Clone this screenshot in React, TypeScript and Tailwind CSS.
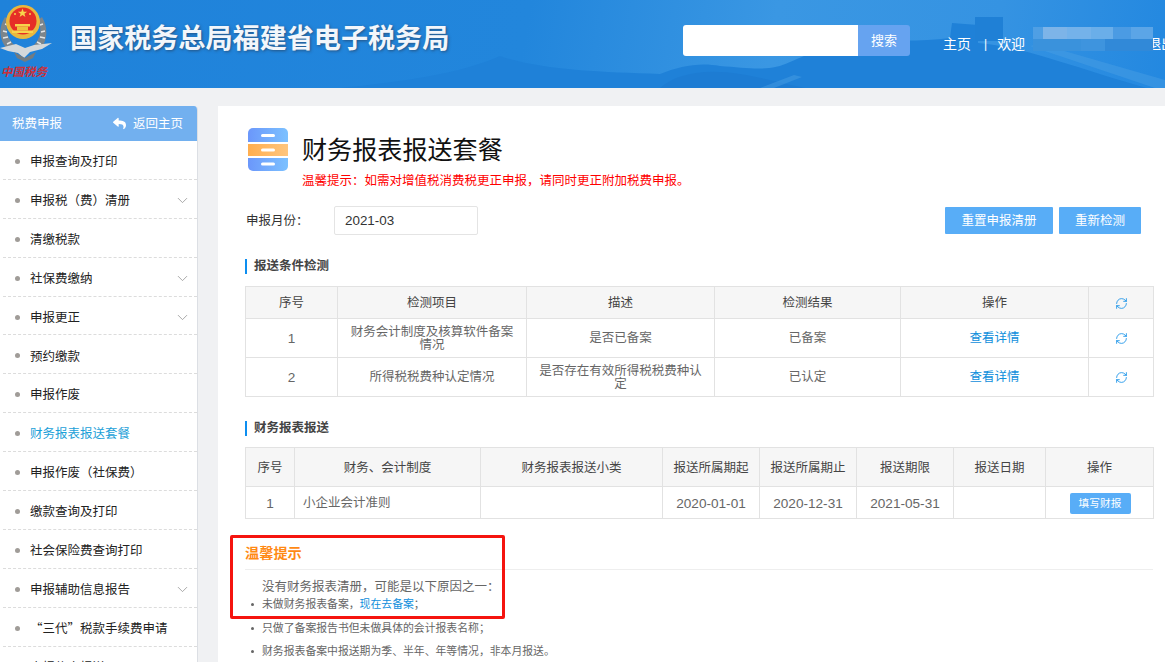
import { ChevronDown, RefreshCw } from "lucide-react";
import { FaReply } from "react-icons/fa";

const menu: [string, boolean][] = [
  ["申报查询及打印", false],
  ["申报税（费）清册", true],
  ["清缴税款", false],
  ["社保费缴纳", true],
  ["申报更正", true],
  ["预约缴款", false],
  ["申报作废", false],
  ["财务报表报送套餐", false],
  ["申报作废（社保费）", false],
  ["缴款查询及打印", false],
  ["社会保险费查询打印", false],
  ["申报辅助信息报告", true],
  ["“三代”税款手续费申请", false],
  ["申报信息报送", false],
];

/** Tax bureau emblem, drawn small. */
function Emblem() {
  return (
    <svg width="54" height="80" viewBox="0 0 54 80" className="shrink-0">
      <path d="M5 17C-2 28-1 40 8 50l7-4C7 38 4 28 9 20z" fill="#7c858b" />
      <path d="M42 17c6 10 6 22-1 32l-7-4c7-7 8-17 4-25z" fill="#7c858b" />
      <path d="M5 24l3 1M3 31l4 1M3 38l5-1M7 44l4-2M43 24l-3 1M45 31l-4 1M45 38l-5-1M41 44l-4-2" stroke="#e4e7e8" strokeWidth="1.4" />
      <path d="M0 48l16-4 9 4 9-3 18-2-10 6-12 3-6 6-6-5-10-2z" fill="#d4d8da" />
      <path d="M14 52l11 6 11-6-3 6-8 4-8-4z" fill="#737b80" />
      <circle cx="23" cy="22" r="17" fill="#e9b83e" />
      <circle cx="23" cy="21" r="13.5" fill="#e62e27" />
      <path d="M22.5 8.5l1.2 3.2h3.4l-2.7 2 1 3.3-2.9-2-2.9 2 1-3.3-2.7-2h3.4z" fill="#f7d44c" />
      <circle cx="15" cy="14" r="1" fill="#f7d44c" />
      <circle cx="30" cy="14" r="1" fill="#f7d44c" />
      <rect x="15" y="24" width="15" height="2.5" fill="#f7d44c" />
      <rect x="17" y="26.5" width="11" height="4" fill="#efc03e" />
      <rect x="12" y="30.5" width="21" height="2.5" fill="#f7d44c" />
      <text x="1" y="76" fontSize="11.5" fontWeight="700" fill="#cc3038" fontFamily="'Noto Sans CJK SC', sans-serif" fontStyle="italic" textLength="46">
        中国税务
      </text>
    </svg>
  );
}

/** Three stacked drawers beside the page title. */
function DrawerIcon() {
  return (
    <svg width="40" height="43" viewBox="0 0 40 43" className="shrink-0">
      <defs>
        <linearGradient id="dBlue" x1="0" x2="1">
          <stop offset="0" stopColor="#6b97fb" />
          <stop offset="1" stopColor="#7cc1ff" />
        </linearGradient>
        <linearGradient id="dOrange" x1="0" x2="1">
          <stop offset="0" stopColor="#ffae4f" />
          <stop offset="1" stopColor="#ffc67e" />
        </linearGradient>
      </defs>
      <path d="M5 0h30a5 5 0 0 1 5 5v9H0V5a5 5 0 0 1 5-5z" fill="url(#dBlue)" />
      <rect y="16" width="40" height="12" fill="url(#dOrange)" />
      <path d="M0 30h40v8a5 5 0 0 1-5 5H5a5 5 0 0 1-5-5z" fill="url(#dBlue)" />
      <rect x="13" y="6" width="14" height="3" rx="1.5" fill="#fff" />
      <rect x="13" y="20.5" width="14" height="3" rx="1.5" fill="#fff" />
      <rect x="13" y="34.5" width="14" height="3" rx="1.5" fill="#fff" />
    </svg>
  );
}

function SectionTitle({ children }: { children: string }) {
  return (
    <div className="flex h-[15px] items-center border-l-2 border-[#0d8ef0] pl-[7px] font-bold text-[#444]">
      {children}
    </div>
  );
}

const th = "border border-[#e2e2e2] bg-[#f6f6f6] pt-[2px] font-normal text-[#444]";
const td = "border border-[#e2e2e2] px-3 pt-[1px] text-center leading-[13px] text-[#666]";
const num = "border border-[#e2e2e2] pt-[1px] text-center text-[13.6px] leading-[13px] text-[#666]";
const link = "border border-[#e2e2e2] px-3 pt-[1px] text-center leading-[13px] text-[#0f8fdc]";

export default function App() {
  return (
    <div className="h-[662px] w-[1165px] overflow-hidden bg-[#f0f1f3] font-['Liberation_Sans','Noto_Sans_CJK_SC',sans-serif] text-[12.5px] [text-spacing-trim:space-all]">
      <header className="relative flex h-[88px] items-center overflow-hidden bg-[linear-gradient(100deg,#1f82da_0%,#2286dc_45%,#3a97e3_66%,#3593e2_85%,#2388e0_100%)]">
        {/* Great Wall backdrop */}
        <svg width="1165" height="88" viewBox="0 0 1165 88" className="absolute left-0 top-0">
          <path d="M340 88c60-6 120-14 160-32 40 14 100 16 160 18 20-8 40-12 60-8 30 2 50 6 70-4 20-8 40-20 70-22 30 0 60 2 90-2l2-15 26 2v18c50 4 110 30 187 50v3z" fill="#1f81d8" />
          <path d="M660 88c15-14 45-20 80-14 25 4 45 10 65 14z" fill="#1d7cd3" />
          <path d="M760 88l34-13 8 2-28 11zM1030 46l10-2 125 36v8h-10z" fill="#4b9fe4" opacity=".45" />
          <path d="M975 17h28v24h-28z" fill="#1f80d6" />
        </svg>
        <div className="relative flex shrink-0 items-center">
          <div className="h-[88px] w-[70px]">
            <Emblem />
          </div>
          <div className="mb-[10px] w-[380px] whitespace-nowrap text-[27.1px] font-bold leading-none text-[#f2f6fb] [text-shadow:1px_1px_3px_rgba(40,50,70,0.6)]">
            国家税务总局福建省电子税务局
          </div>
        </div>
        <div className="relative mb-[7px] ml-[233px] flex shrink-0 items-center">
          <div className="h-[31px] w-[175px] rounded-l-[3px] bg-white" />
          <div className="flex h-[31px] w-[52px] items-center justify-center rounded-r-[3px] bg-[#66a3f0] text-[13px] text-white">
            搜索
          </div>
        </div>
        <div className="relative ml-[33px] flex items-center whitespace-nowrap text-[14px] text-white">
          <span>主页</span>
          <span className="ml-[13px] mr-[10px] text-[12px]">|</span>
          <span>欢迎</span>
          <span className="ml-[122px]">退出</span>
          {/* blurred user name */}
          <div className="absolute left-[90px] top-[-7px] flex flex-col">
            <div className="flex h-[12px]">
              <div className="w-[10px] bg-[#4f9fe4]" />
              <div className="w-[24px] bg-[#7db4e8]" />
              <div className="w-[24px] bg-[#74b2ea]" />
              <div className="w-[22px] bg-[#6aaee9]" />
              <div className="w-[18px] bg-[#4b9be3]" />
              <div className="w-[22px] bg-[#5ba5e7]" />
            </div>
            <div className="flex h-[12px]">
              <div className="w-[48px] bg-[#3a92dc]" />
              <div className="w-[24px] bg-[#3e94de]" />
              <div className="w-[48px] bg-[#3189d8]" />
            </div>
          </div>
        </div>
      </header>

      <div className="flex items-start gap-5 pt-[18px]">
        <aside className="h-[556px] w-[198px] shrink-0 overflow-hidden rounded-tr-[4px] border-r border-[#dcdfe4] bg-white font-['Noto_Sans_CJK_SC',sans-serif]">
          <div className="flex h-[35px] items-center justify-between bg-[#72b0ef] pl-3 pr-[14px] text-white">
            <span>税费申报</span>
            <span className="flex items-center gap-[7px]">
              <FaReply size={13} />
              返回主页
            </span>
          </div>
          {menu.map(([label, arrow]) => (
            <div
              key={label}
              className={`ml-[3px] flex h-[38.9px] items-center justify-between border-b border-dashed border-[#dcdcdc] pl-[12px] pr-[6px] pt-[3px] ${
                label === "财务报表报送套餐" ? "text-[#1ba0d8]" : "text-[#222]"
              }`}
            >
              <span className="flex items-center gap-[10px] whitespace-nowrap">
                <span className="h-[5px] w-[5px] rounded-full bg-[#a09c98]" />
                {label}
              </span>
              {arrow && <ChevronDown size={17} strokeWidth={1.2} className="text-[#999]" />}
            </div>
          ))}
        </aside>

        <main className="relative h-[556px] flex-1 overflow-hidden bg-white pl-[27px] pr-3">
          <div className="ml-[3px] flex pt-[22px]">
            <DrawerIcon />
            <div className="ml-[14px]">
              <h1 className="pt-[6px] text-[25.1px] leading-[33px] text-[#111]">财务报表报送套餐</h1>
              <p className="mt-[6px] whitespace-nowrap leading-[17px] text-[#f00]">
                温馨提示：如需对增值税消费税更正申报，请同时更正附加税费申报。
              </p>
            </div>
          </div>

          <div className="mt-[16px] flex items-center">
            <span className="w-[89px] pl-px pt-[2px] text-[#333]">申报月份：</span>
            <div className="flex h-[29px] w-[144px] items-center rounded-[2px] border border-[#e4e4e4] pl-[10px] pt-[1px] text-[13.4px] text-[#333]">
              2021-03
            </div>
            <div className="ml-auto mr-3 flex gap-[6px] text-white">
              <span className="flex h-[27px] w-[108px] items-center justify-center rounded-[1px] bg-[#58adf7] pt-[1px]">重置申报清册</span>
              <span className="flex h-[27px] w-[82px] items-center justify-center rounded-[1px] bg-[#58adf7] pt-[1px]">重新检测</span>
            </div>
          </div>

          <div className="mt-[24px]">
            <SectionTitle>报送条件检测</SectionTitle>
          </div>
          <table className="mt-[12px] w-[908px] table-fixed border-collapse">
            <colgroup>
              <col className="w-[92px]" />
              <col className="w-[189px]" />
              <col className="w-[188px]" />
              <col className="w-[186px]" />
              <col className="w-[188px]" />
              <col className="w-[65px]" />
            </colgroup>
            <thead>
              <tr className="h-[32px]">
                <th className={th}>序号</th>
                <th className={th}>检测项目</th>
                <th className={th}>描述</th>
                <th className={th}>检测结果</th>
                <th className={th}>操作</th>
                <th className={th}>
                  <RefreshCw size={13} strokeWidth={1.5} className="mx-auto text-[#0d8ee8]" />
                </th>
              </tr>
            </thead>
            <tbody>
              <tr className="h-[39px]">
                <td className={num}>1</td>
                <td className={td}>财务会计制度及核算软件备案情况</td>
                <td className={td}>是否已备案</td>
                <td className={td}>已备案</td>
                <td className={link}>查看详情</td>
                <td className={td}>
                  <RefreshCw size={13} strokeWidth={1.5} className="mx-auto text-[#0d8ee8]" />
                </td>
              </tr>
              <tr className="h-[39px]">
                <td className={num}>2</td>
                <td className={td}>所得税税费种认定情况</td>
                <td className={td}>是否存在有效所得税税费种认定</td>
                <td className={td}>已认定</td>
                <td className={link}>查看详情</td>
                <td className={td}>
                  <RefreshCw size={13} strokeWidth={1.5} className="mx-auto text-[#0d8ee8]" />
                </td>
              </tr>
            </tbody>
          </table>

          <div className="mt-[24px]">
            <SectionTitle>财务报表报送</SectionTitle>
          </div>
          <table className="mt-[11px] w-[908px] table-fixed border-collapse">
            <colgroup>
              <col className="w-[49px]" />
              <col className="w-[186px]" />
              <col className="w-[182px]" />
              <col className="w-[97px]" />
              <col className="w-[97px]" />
              <col className="w-[97px]" />
              <col className="w-[92px]" />
              <col className="w-[108px]" />
            </colgroup>
            <thead>
              <tr className="h-[39px]">
                <th className={th}>序号</th>
                <th className={th}>财务、会计制度</th>
                <th className={th}>财务报表报送小类</th>
                <th className={`${th} whitespace-nowrap`}>报送所属期起</th>
                <th className={`${th} whitespace-nowrap`}>报送所属期止</th>
                <th className={th}>报送期限</th>
                <th className={th}>报送日期</th>
                <th className={th}>操作</th>
              </tr>
            </thead>
            <tbody>
              <tr className="h-[32px]">
                <td className={num}>1</td>
                <td className={`${td} !px-2 !text-left`}>小企业会计准则</td>
                <td className={td} />
                <td className={num}>2020-01-01</td>
                <td className={num}>2020-12-31</td>
                <td className={num}>2021-05-31</td>
                <td className={td} />
                <td className={td}>
                  <span className="ml-px inline-flex h-[21px] w-[61px] items-center justify-center rounded-[2px] bg-[#58adf7] text-[10.7px] text-white">
                    填写财报
                  </span>
                </td>
              </tr>
            </tbody>
          </table>

          <div className="mt-[26px] border-b border-[#eeeeee] pb-[7px] text-[14.2px] font-bold leading-[17px] text-[#ff8a14]">
            温馨提示
          </div>
          <p className="ml-[17px] mt-[9px] leading-[16px] text-[#666]">没有财务报表清册，可能是以下原因之一：</p>
          <ul className="mt-[2px] text-[10.85px] leading-[15px] text-[#666]">
            <li className="flex items-center">
              <span className="ml-[6px] mr-[8px] h-[3px] w-[3px] rounded-full bg-[#666]" />
              未做财务报表备案，<span className="text-[#0f8fdc]">现在去备案</span>；
            </li>
            <li className="mt-[9px] flex items-center">
              <span className="ml-[6px] mr-[8px] h-[3px] w-[3px] rounded-full bg-[#666]" />
              只做了备案报告书但未做具体的会计报表名称；
            </li>
            <li className="mt-[8px] flex items-center">
              <span className="ml-[6px] mr-[8px] h-[3px] w-[3px] rounded-full bg-[#666]" />
              财务报表备案中报送期为季、半年、年等情况，非本月报送。
            </li>
          </ul>

          {/* red annotation box drawn on the screenshot */}
          <div className="absolute left-[12px] top-[429px] h-[84px] w-[275px] rounded-[2px] border-[3px] border-[#f5140f]" />
        </main>
      </div>
    </div>
  );
}
